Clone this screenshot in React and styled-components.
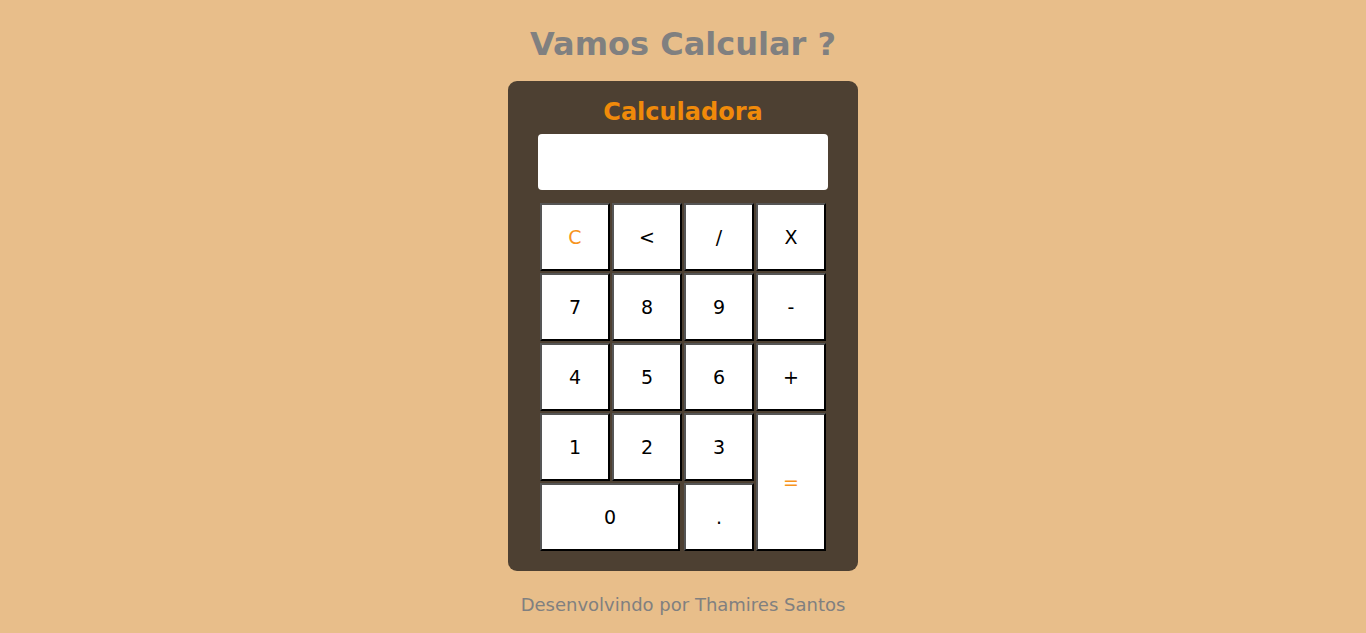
import React from 'react';
import styled, { createGlobalStyle } from 'styled-components';

const GlobalStyle = createGlobalStyle`
    body {
        margin: 0;
        background-color: #e8be8a;
        font-family: "DejaVu Sans", Verdana, sans-serif;
    }
`;

const Page = styled.main`
    display: flex;
    flex-direction: column;
    align-items: center;
    padding-top: 24px;
    min-height: 609px;
`;

const Title = styled.h1`
    margin: 0;
    font-size: 32px;
    line-height: 40px;
    font-weight: bold;
    color: #808080;
`;

const Card = styled.section`
    width: 350px;
    box-sizing: border-box;
    margin-top: 17px;
    padding: 16px 30px 20px;
    background-color: #4d4032;
    border-radius: 9px;
    display: flex;
    flex-direction: column;
    align-items: center;
`;

const CardTitle = styled.h2`
    margin: 0;
    font-size: 24px;
    line-height: 30px;
    font-weight: bold;
    color: #f08a0a;
`;

const Display = styled.input`
    width: 290px;
    height: 56px;
    box-sizing: border-box;
    margin-top: 7px;
    border: none;
    border-radius: 4px;
    background: #fff;
    font-family: inherit;
    font-size: 24px;
    padding: 0 10px;
    outline: none;
`;

const Keys = styled.div`
    margin-top: 13px;
    display: grid;
    grid-template-columns: repeat(4, 70px);
    grid-auto-rows: 68px;
    gap: 2px;
`;

const Key = styled.button`
    box-sizing: border-box;
    width: ${({ $wide }) => ($wide ? '140px' : '70px')};
    grid-column: ${({ $wide }) => ($wide ? 'span 2' : 'auto')};
    grid-row: ${({ $tall }) => ($tall ? 'span 2' : 'auto')};
    justify-self: start;
    background: #fff;
    border-style: solid;
    border-width: 2px;
    border-color: #555 #000 #000 #555;
    padding: 0;
    font-family: "DejaVu Sans", Verdana, sans-serif;
    font-size: 19px;
    color: ${({ $accent }) => ($accent ? '#f7941d' : '#000')};
    cursor: pointer;
`;

const Footer = styled.p`
    margin: 24px 0 0;
    font-size: 18px;
    line-height: 20px;
    color: #808080;
`;

const keys = [
    { label: 'C', accent: true },
    { label: '<' },
    { label: '/' },
    { label: 'X' },
    { label: '7' },
    { label: '8' },
    { label: '9' },
    { label: '-' },
    { label: '4' },
    { label: '5' },
    { label: '6' },
    { label: '+' },
    { label: '1' },
    { label: '2' },
    { label: '3' },
    { label: '=', accent: true, tall: true },
    { label: '0', wide: true },
    { label: '.' },
];

const App = () => {
    return (
        <>
            <GlobalStyle />
            <Page>
                <Title>Vamos Calcular ?</Title>
                <Card>
                    <CardTitle>Calculadora</CardTitle>
                    <Display type='text' readOnly />
                    <Keys>
                        {keys.map((k) => (
                            <Key
                                key={k.label}
                                $accent={k.accent}
                                $wide={k.wide}
                                $tall={k.tall}
                            >
                                {k.label}
                            </Key>
                        ))}
                    </Keys>
                </Card>
                <Footer>Desenvolvindo por Thamires Santos</Footer>
            </Page>
        </>
    )
}

export default App
